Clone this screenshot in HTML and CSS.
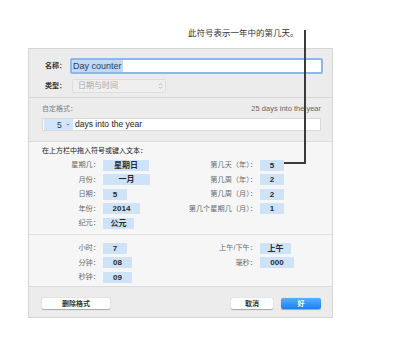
FILE: index.html
```html
<!DOCTYPE html>
<html lang="zh">
<head>
<meta charset="utf-8">
<title>Day counter</title>
<link rel="stylesheet" href="styles.css">
</head>
<body>
<div class="page">
  <div class="note-row">此符号表示一年中的第几天。</div>
  <div class="leader"></div>
  <div class="dialog">
    <div class="sec sec-top">
      <div class="frow">
        <span class="flabel">名称：</span>
        <div class="name-input"><span class="sel">Day counter</span></div>
      </div>
      <div class="frow">
        <span class="flabel">类型：</span>
        <div class="popup"><span>日期与时间</span>
          <svg width="5" height="8" viewBox="0 0 5 8"><path d="M1 3.2 L2.5 1.6 L4 3.2 M1 4.8 L2.5 6.4 L4 4.8" stroke="#b0b0b0" fill="none" stroke-width="0.8"/></svg>
        </div>
      </div>
    </div>
    <div class="sec sec-fmt">
      <div class="fmt-head"><span>自定格式：</span><span class="preview">25 days into the year</span></div>
      <div class="fmt-field">
        <span class="ftoken">5<svg class="fchev" width="4" height="3" viewBox="0 0 4 3"><path d="M0.5 0.7 L2 2.2 L3.5 0.7" stroke="#4a6a95" fill="none" stroke-width="0.8"/></svg></span>
        <span class="ftext">days into the year</span>
      </div>
    </div>
    <div class="sec sec-date">
      <div class="hint">在上方栏中拖入符号或键入文本：</div>
      <div class="grid">
        <span class="lbl">星期几：</span><span class="tok w46">星期日</span>
        <span class="lbl">第几天（年）：</span><span class="tok w24">5</span>
        <span class="lbl">月份：</span><span class="tok w47">一月</span>
        <span class="lbl">第几周（年）：</span><span class="tok w24">2</span>
        <span class="lbl">日期：</span><span class="tok w24">5</span>
        <span class="lbl">第几周（月）：</span><span class="tok w24">2</span>
        <span class="lbl">年份：</span><span class="tok w37">2014</span>
        <span class="lbl">第几个星期几（月）：</span><span class="tok w24">1</span>
        <span class="lbl">纪元：</span><span class="tok w31">公元</span>
      </div>
    </div>
    <div class="sec sec-time">
      <div class="grid grid-time">
        <span class="lbl">小时：</span><span class="tok w24">7</span>
        <span class="lbl">上午/下午：</span><span class="tok w31">上午</span>
        <span class="lbl">分钟：</span><span class="tok w29">08</span>
        <span class="lbl">毫秒：</span><span class="tok w34">000</span>
        <span class="lbl">秒钟：</span><span class="tok w29">09</span>
      </div>
    </div>
    <div class="sec sec-btns">
      <div class="btn btn-del">删除格式</div>
      <div class="spacer"></div>
      <div class="btn btn-cancel">取消</div>
      <div class="btn btn-ok">好</div>
    </div>
  </div>
</div>
</body>
</html>
```
FILE: styles.css
```css
body {
  margin: 0;
  background: #fff;
  font-family: "Liberation Sans", "Noto Sans CJK SC", sans-serif;
}
.page {
  position: relative;
  width: 400px;
  height: 337px;
  overflow: hidden;
}
.note-row {
  height: 48px;
  box-sizing: border-box;
  padding: 28px 0 0 188px;
  font-size: 8.5px;
  line-height: 10px;
  color: #333;
}
.leader {
  position: absolute;
  left: 284px;
  top: 30px;
  width: 20px;
  height: 132px;
  border-right: 2px solid #3a3a3a;
  border-bottom: 2px solid #3a3a3a;
}
.dialog {
  margin-left: 28px;
  width: 305px;
  box-sizing: border-box;
  border: 1px solid #d6d6d6;
  background: #ececec;
}
.sec-top {
  padding: 9px 9px 4px 16px;
  border-bottom: 1px solid #d8d8d8;
  display: flex;
  flex-direction: column;
  gap: 5px;
}
.frow {
  display: flex;
  align-items: center;
}
.flabel {
  width: 24px;
  margin-right: 1px;
  font-size: 7px;
  font-weight: bold;
  color: #333;
  line-height: 10px;
}
.name-input {
  flex: 1;
  height: 16px;
  box-sizing: border-box;
  border: 2px solid #8cb6ee;
  border-radius: 2px;
  background: #fff;
  display: flex;
}
.sel {
  background: #c2d8f5;
  color: #1f3b66;
  font-size: 9px;
  line-height: 12px;
  padding: 0 1px;
}
.popup {
  margin-left: 2px;
  width: 94px;
  height: 14px;
  box-sizing: border-box;
  border: 1px solid #dedede;
  border-radius: 2px;
  background: #efefef;
  display: flex;
  align-items: center;
  justify-content: space-between;
  padding: 0 2px 0 5px;
  color: #a8a8a8;
  font-size: 8px;
  line-height: 10px;
}
.sec-fmt {
  padding: 6px 11px 10px 13px;
  border-bottom: 1px solid #dcdcdc;
}
.fmt-head {
  display: flex;
  justify-content: space-between;
  line-height: 10px;
  font-size: 7px;
  color: #808080;
}
.preview {
  font-size: 7.5px;
  color: #666;
}
.fmt-field {
  margin-top: 4px;
  height: 13px;
  box-sizing: border-box;
  background: #fff;
  border: 1px solid #dadada;
  display: flex;
  align-items: center;
  padding-left: 1px;
}
.ftoken {
  height: 11px;
  width: 29px;
  box-sizing: border-box;
  padding-left: 13px;
  background: #d3e5f9;
  display: flex;
  align-items: center;
  font-size: 8.5px;
  color: #2b3a55;
}
.fchev {
  margin-left: 4px;
}
.ftext {
  margin-left: 2px;
  font-size: 8.5px;
  color: #222;
  line-height: 11px;
}
.sec-date {
  background: #f6f6f6;
  padding: 4px 0 5px 13px;
  border-bottom: 1px solid #e0e0e0;
}
.hint {
  font-size: 7px;
  line-height: 10px;
  color: #1a1a1a;
}
.grid {
  display: grid;
  grid-template-columns: 61px 77px 80px auto;
  grid-auto-rows: 12px;
  row-gap: 2.5px;
  margin-top: 3px;
  align-items: center;
}
.grid-time {
  margin-top: 0;
}
.lbl {
  text-align: right;
  padding-right: 3px;
  font-size: 7.2px;
  color: #6a6a6a;
  line-height: 12px;
  white-space: nowrap;
}
.tok {
  justify-self: start;
  height: 11px;
  display: flex;
  align-items: center;
  justify-content: center;
  background: #cfe3f8;
  color: #2a2a2a;
  font-size: 8px;
  font-weight: bold;
  line-height: 11px;
}
.w24 { width: 24px; }
.w29 { width: 29px; }
.w31 { width: 31px; }
.w34 { width: 34px; }
.w37 { width: 37px; }
.w46 { width: 46px; }
.w47 { width: 47px; }
.sec-time {
  background: #f6f6f6;
  padding: 7px 0 3px 13px;
  border-bottom: 1px solid #dcdcdc;
}
.sec-btns {
  display: flex;
  padding: 11px 11px 8px 13px;
}
.btn {
  height: 11px;
  box-sizing: border-box;
  background: #fff;
  border-radius: 2px;
  box-shadow: 0 0.5px 1px rgba(0, 0, 0, 0.3);
  font-size: 7px;
  font-weight: bold;
  color: #333;
  display: flex;
  align-items: center;
  justify-content: center;
  line-height: 10px;
}
.btn-del { width: 68px; }
.spacer { flex: 1; }
.btn-cancel { width: 42px; margin-right: 8px; }
.btn-ok {
  width: 40px;
  background: linear-gradient(#5aaefc, #1b7ef4);
  color: #fff;
}
```
